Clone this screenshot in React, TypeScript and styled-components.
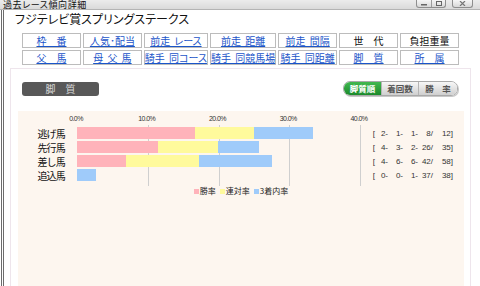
import React from 'react'
import styled, { createGlobalStyle } from 'styled-components'

const GlobalStyle = createGlobalStyle`
    html, body {
        margin: 0;
        padding: 0;
        background: #ffffff;
    }
    body {
        font-family: "Noto Sans CJK JP", "Liberation Sans", sans-serif;
        color: #111;
    }
`

const Window = styled.div`
    width: 480px;
    height: 286px;
    overflow: hidden;
    display: flex;
    flex-direction: column;
    background: #fff;
`

const TitleBar = styled.div`
    flex: none;
    height: 9px;
    display: flex;
    align-items: flex-start;
    justify-content: space-between;
    padding: 0 7px 0 3px;
    background: linear-gradient(#ececec, #dadada);
    border-bottom: 1px solid #b4b4b4;
`

const TitleText = styled.div`
    font-size: 9px;
    line-height: 9px;
    font-feature-settings: "palt";
    letter-spacing: 0.6px;
    color: #111;
`

const Controls = styled.div`
    display: flex;
    gap: 6px;
`

const ControlGroup = styled.div`
    display: flex;
    border: 1px solid #8e8e8e;
    border-top: none;
    border-radius: 0 0 3px 3px;
    overflow: hidden;
    background: linear-gradient(#f6f6f6, #d8d8d8);
`

const ControlButton = styled.div<{ $w: number }>`
    width: ${p => p.$w}px;
    height: 7px;
    display: flex;
    align-items: center;
    justify-content: center;

    & + & {
        border-left: 1px solid #9c9c9c;
    }
`

const Body = styled.div`
    flex: 1;
    min-height: 0;
    display: flex;
    flex-direction: column;
    margin-left: 1px;
    border-left: 3px double #6c6c6c;
`

const RaceTitle = styled.h1`
    margin: 0;
    padding: 2px 0 0 11px;
    font-size: 12px;
    line-height: 14px;
    font-weight: normal;
    font-feature-settings: "palt";
    color: #111;
`

const NavGrid = styled.div`
    margin: 7px 0 0 18px;
    width: 437px;
    display: grid;
    grid-template-columns: repeat(7, 1fr);
    grid-auto-rows: 15px;
    gap: 2px;
`

const NavCell = styled.div`
    box-sizing: border-box;
    border: 1px solid #bcbcbc;
    background: #fff;
    font-size: 10px;
    line-height: 13px;
    text-align: center;
    white-space: nowrap;
    font-feature-settings: "palt";
    word-spacing: 2px;
`

const NavLink = styled.a`
    color: #1b55c9;
    text-decoration: underline;
    cursor: pointer;
`

const NavPlain = styled.span`
    color: #111;
`

const Panel = styled.div`
    flex: 1;
    margin: 3px 0 0 6px;
    width: 461px;
    box-sizing: border-box;
    display: flex;
    flex-direction: column;
    border: 1px solid #eee5ec;
    border-bottom: none;
`

const PanelHeader = styled.div`
    display: flex;
    align-items: center;
    justify-content: space-between;
    padding: 12px 12px 0 11px;
`

const SectionLabel = styled.div`
    width: 77px;
    height: 14px;
    border-radius: 3px;
    background: #585858;
    color: #d6d6d6;
    font-size: 10px;
    line-height: 14px;
    text-align: center;
`

const Toggle = styled.div`
    display: flex;
    height: 13px;
    border: 1px solid #a9a9a9;
    border-radius: 7px;
    overflow: hidden;
    box-shadow: 1px 1px 0 #c8c8c8;
`

const ToggleItem = styled.div<{ $active?: boolean; $w: number }>`
    width: ${p => p.$w}px;
    font-size: 8.5px;
    font-weight: bold;
    line-height: 13px;
    text-align: center;
    color: ${p => (p.$active ? '#ffffff' : '#555555')};
    background: ${p =>
        p.$active
            ? 'linear-gradient(#41b84f, #1c8a2b)'
            : 'linear-gradient(#f7f7f7, #cfcfcf)'};

    & + & {
        border-left: 1px solid #b4b4b4;
    }
`

const Chart = styled.div`
    flex: 1;
    margin: 15px 0 0 7px;
    width: 446px;
    padding-top: 4px;
    background: #fdf6ef;
`

const AxisRow = styled.div`
    position: relative;
    margin-left: 59px;
    width: 284px;
    height: 10px;
`

const AxisLabel = styled.span`
    position: absolute;
    top: 0;
    transform: translateX(calc(-50% - 1px));
    font-family: "Liberation Sans", sans-serif;
    font-size: 7px;
    line-height: 8px;
    letter-spacing: -0.6px;
    color: #333;
`

const PlotRow = styled.div`
    display: flex;
`

const LabelCol = styled.div`
    width: 59px;
    padding-top: 2px;
`

const RowLabel = styled.div`
    height: 14px;
    padding-right: 12px;
    font-size: 10px;
    line-height: 13px;
    letter-spacing: -0.8px;
    text-align: right;
    color: #111;
`

const Plot = styled.div`
    position: relative;
    width: 284px;
    padding: 2px 0 3px;
`

const GridLine = styled.div`
    position: absolute;
    top: 0;
    bottom: 0;
    width: 1px;
    background: #cfcfcf;
`

const Track = styled.div`
    position: relative;
    height: 14px;
`

const Bar = styled.div`
    display: flex;
    height: 12px;
`

const Segment = styled.div<{ $color: string }>`
    height: 100%;
    background: ${p => p.$color};
`

const StatCol = styled.div`
    margin-left: 11px;
    padding-top: 2px;
`

const StatRow = styled.div`
    display: flex;
    height: 14px;
    font-family: "Liberation Sans", sans-serif;
    font-size: 8px;
    line-height: 14px;
    color: #333;
    white-space: pre;
`

const StatCell = styled.span<{ $w: number }>`
    width: ${p => p.$w}px;
    text-align: right;
`

const Legend = styled.div`
    display: flex;
    justify-content: center;
    gap: 4px;
    margin-top: 1px;
    font-size: 8px;
    line-height: 8px;
    color: #222;
`

const LegendItem = styled.span`
    display: flex;
    align-items: center;
    gap: 1px;
`

const Swatch = styled.span<{ $color: string }>`
    width: 5px;
    height: 5px;
    background: ${p => p.$color};
`

const PINK = '#ffb3ba'
const YELLOW = '#fffa9c'
const BLUE = '#9fcbfa'
const PX_PER_PCT = 283 / 40

const navItems: { label: string; link: boolean }[] = [
    { label: '枠　番', link: true },
    { label: '人気･配当', link: true },
    { label: '前走 レース', link: true },
    { label: '前走 距離', link: true },
    { label: '前走 間隔', link: true },
    { label: '世　代', link: false },
    { label: '負担重量', link: false },
    { label: '父　馬', link: true },
    { label: '母 父 馬', link: true },
    { label: '騎手 同コース', link: true },
    { label: '騎手 同競馬場', link: true },
    { label: '騎手 同距離', link: true },
    { label: '脚　質', link: true },
    { label: '所　属', link: true },
]

const rows = [
    { name: '逃げ馬', res: [2, 1, 1, 8], n: 12 },
    { name: '先行馬', res: [4, 3, 2, 26], n: 35 },
    { name: '差し馬', res: [4, 6, 6, 42], n: 58 },
    { name: '追込馬', res: [0, 0, 1, 37], n: 38 },
]

const WindowControls = () => (
    <Controls>
        <ControlGroup>
            <ControlButton $w={14}>
                <svg width="6" height="5" viewBox="0 0 6 5">
                    <rect x="0" y="3" width="6" height="1.5" fill="#666" />
                </svg>
            </ControlButton>
            <ControlButton $w={13}>
                <svg width="6" height="5" viewBox="0 0 6 5">
                    <rect x="0.5" y="0.5" width="5" height="4" fill="none" stroke="#666" />
                </svg>
            </ControlButton>
        </ControlGroup>
        <ControlGroup>
            <ControlButton $w={19}>
                <svg width="7" height="5" viewBox="0 0 7 5">
                    <path d="M1 0 L6 5 M6 0 L1 5" stroke="#777" strokeWidth="1.2" />
                </svg>
            </ControlButton>
        </ControlGroup>
    </Controls>
)

const App = () => {
    const renderNav = () => (
        <NavGrid>
            {navItems.map(item => (
                <NavCell key={item.label}>
                    {item.link ? <NavLink>{item.label}</NavLink> : <NavPlain>{item.label}</NavPlain>}
                </NavCell>
            ))}
        </NavGrid>
    )

    const renderChart = () => (
        <Chart>
            <AxisRow>
                {[0, 10, 20, 30, 40].map(v => (
                    <AxisLabel key={v} style={{ left: v * PX_PER_PCT }}>{`${v.toFixed(1)}%`}</AxisLabel>
                ))}
            </AxisRow>
            <PlotRow>
                <LabelCol>
                    {rows.map(r => <RowLabel key={r.name}>{r.name}</RowLabel>)}
                </LabelCol>
                <Plot>
                    {[10, 20, 30, 40].map(v => (
                        <GridLine key={v} style={{ left: v * PX_PER_PCT }} />
                    ))}
                    {rows.map(r => {
                        const [w, s, t] = r.res
                        const win = (w / r.n) * 100
                        const ren = ((w + s) / r.n) * 100
                        const fuku = ((w + s + t) / r.n) * 100
                        return (
                            <Track key={r.name}>
                                <Bar>
                                    <Segment $color={PINK} style={{ width: win * PX_PER_PCT }} />
                                    <Segment $color={YELLOW} style={{ width: (ren - win) * PX_PER_PCT }} />
                                    <Segment $color={BLUE} style={{ width: (fuku - ren) * PX_PER_PCT }} />
                                </Bar>
                            </Track>
                        )
                    })}
                </Plot>
                <StatCol>
                    {rows.map(r => (
                        <StatRow key={r.name}>
                            <StatCell $w={3}>[</StatCell>
                            <StatCell $w={13}>{`${r.res[0]}-`}</StatCell>
                            <StatCell $w={15}>{`${r.res[1]}-`}</StatCell>
                            <StatCell $w={15}>{`${r.res[2]}-`}</StatCell>
                            <StatCell $w={15}>{`${r.res[3]}/`}</StatCell>
                            <StatCell $w={20}>{`${r.n}]`}</StatCell>
                        </StatRow>
                    ))}
                </StatCol>
            </PlotRow>
            <Legend>
                <LegendItem><Swatch $color={PINK} />勝率</LegendItem>
                <LegendItem><Swatch $color={YELLOW} />連対率</LegendItem>
                <LegendItem><Swatch $color={BLUE} />3着内率</LegendItem>
            </Legend>
        </Chart>
    )

    return (
        <>
            <GlobalStyle />
            <Window>
                <TitleBar>
                    <TitleText>過去レース傾向詳細</TitleText>
                    <WindowControls />
                </TitleBar>
                <Body>
                    <RaceTitle>フジテレビ賞スプリングステークス</RaceTitle>
                    {renderNav()}
                    <Panel>
                        <PanelHeader>
                            <SectionLabel>脚　質</SectionLabel>
                            <Toggle>
                                <ToggleItem $active $w={37}>脚質順</ToggleItem>
                                <ToggleItem $w={36}>着回数</ToggleItem>
                                <ToggleItem $w={38}>勝　率</ToggleItem>
                            </Toggle>
                        </PanelHeader>
                        {renderChart()}
                    </Panel>
                </Body>
            </Window>
        </>
    )
}

export default App
